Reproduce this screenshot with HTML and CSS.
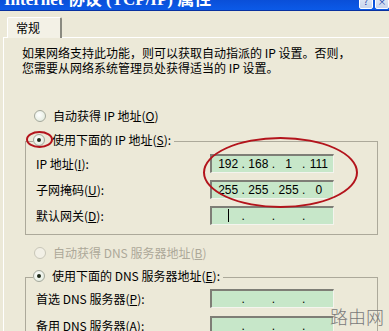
FILE: index.html
```html
<!DOCTYPE html>
<html lang="zh-CN">

<head>
    <meta charset="UTF-8">
    <meta name="viewport" content="width=device-width, initial-scale=1.0">
    <title>Internet 协议 (TCP/IP) 属性</title>
    <link rel="stylesheet" href="styles.css">
</head>

<body>
    <div id="window">
        <div id="titlebar">
            <span id="title-text">Internet 协议 (TCP/IP) 属性</span>
            <div id="caption-buttons">
                <span class="caption-btn">?</span>
                <span class="caption-btn">×</span>
            </div>
        </div>

        <div id="dialog-body">
            <div id="tabs">
                <div class="tab">常规</div>
            </div>

            <div id="tab-panel">
                <p id="intro-text">如果网络支持此功能，则可以获取自动指派的 IP 设置。否则，<br>您需要从网络系统管理员处获得适当的 IP 设置。</p>

                <div class="radio-line" id="ip-auto">
                    <span class="radio"></span>自动获得 IP 地址(<u>O</u>)
                </div>

                <div class="group-box" id="ip-group">
                    <div class="group-title radio-line">
                        <span class="radio checked"></span>使用下面的 IP 地址(<u>S</u>):
                    </div>
                    <div class="field-row">
                        <span class="field-label">IP 地址(<u>I</u>):</span>
                        <div class="ip-box">
                            <span class="octet">192</span><span class="ip-dot">.</span>
                            <span class="octet">168</span><span class="ip-dot">.</span>
                            <span class="octet">1</span><span class="ip-dot">.</span>
                            <span class="octet">111</span>
                        </div>
                    </div>
                    <div class="field-row">
                        <span class="field-label">子网掩码(<u>U</u>):</span>
                        <div class="ip-box">
                            <span class="octet">255</span><span class="ip-dot">.</span>
                            <span class="octet">255</span><span class="ip-dot">.</span>
                            <span class="octet">255</span><span class="ip-dot">.</span>
                            <span class="octet">0</span>
                        </div>
                    </div>
                    <div class="field-row">
                        <span class="field-label">默认网关(<u>D</u>):</span>
                        <div class="ip-box">
                            <span class="octet"><span class="caret"></span></span><span class="ip-dot">.</span>
                            <span class="octet"></span><span class="ip-dot">.</span>
                            <span class="octet"></span><span class="ip-dot">.</span>
                            <span class="octet"></span>
                        </div>
                    </div>
                </div>

                <div class="radio-line disabled" id="dns-auto">
                    <span class="radio"></span>自动获得 DNS 服务器地址(<u>B</u>)
                </div>

                <div class="group-box" id="dns-group">
                    <div class="group-title radio-line">
                        <span class="radio checked"></span>使用下面的 DNS 服务器地址(<u>E</u>):
                    </div>
                    <div class="field-row">
                        <span class="field-label">首选 DNS 服务器(<u>P</u>):</span>
                        <div class="ip-box">
                            <span class="octet"></span><span class="ip-dot">.</span>
                            <span class="octet"></span><span class="ip-dot">.</span>
                            <span class="octet"></span><span class="ip-dot">.</span>
                            <span class="octet"></span>
                        </div>
                    </div>
                    <div class="field-row">
                        <span class="field-label">备用 DNS 服务器(<u>A</u>):</span>
                        <div class="ip-box">
                            <span class="octet"></span><span class="ip-dot">.</span>
                            <span class="octet"></span><span class="ip-dot">.</span>
                            <span class="octet"></span><span class="ip-dot">.</span>
                            <span class="octet"></span>
                        </div>
                    </div>
                </div>
            </div>
        </div>

        <!-- hand-drawn red marks over the screenshot -->
        <div class="red-mark" id="mark-radio"></div>
        <div class="red-mark" id="mark-ip"></div>
        <div id="watermark">路由网</div>
    </div>
</body>

</html>
```

FILE: styles.css
```css
body,
html {
    margin: 0;
    padding: 0;
    width: 389px;
    height: 331px;
    overflow: hidden;
    background: #ECE9D8;
}

#window {
    position: relative;
    width: 389px;
    height: 331px;
    overflow: hidden;
    font-family: "Noto Sans CJK SC", "Liberation Sans", sans-serif;
    font-size: 12px;
    color: #000;
}

#titlebar {
    height: 10px;
    background: linear-gradient(#0A4FD8, #0B5AE8);
    border-bottom: 1px solid #0831A0;
    overflow: hidden;
    display: flex;
    justify-content: space-between;
}

#title-text {
    color: #fff;
    font-family: "Liberation Serif", "Noto Sans CJK SC", serif;
    font-weight: bold;
    font-size: 17px;
    line-height: 17px;
    margin-top: -9px;
    padding-left: 4px;
    white-space: nowrap;
}

#caption-buttons {
    display: flex;
    gap: 2px;
    margin-top: -6px;
}

.caption-btn {
    width: 12px;
    height: 13px;
    background: linear-gradient(#E8EEF8, #C8D4EC);
    border: 1px solid #fff;
    border-radius: 2px;
    color: #0831A0;
    font-size: 9px;
    line-height: 13px;
    text-align: center;
}

#dialog-body {
    padding: 6px 0 0 3px;
}

#tabs {
    display: flex;
    padding-left: 4px;
}

.tab {
    width: 44px;
    height: 20px;
    padding-left: 8px;
    line-height: 20px;
    background: #F3F1E6;
    border-top: 1px solid #fff;
    border-left: 1px solid #fff;
    border-right: 2px solid #8A8A80;
    border-radius: 2px 2px 0 0;
    position: relative;
    z-index: 1;
    margin-bottom: -1px;
}

#tab-panel {
    border-top: 1px solid #fff;
    border-left: 1px solid #fff;
    height: 294px;
    padding-left: 21px;
}

#intro-text {
    margin: 7px 0 0 -3px;
    line-height: 15px;
    white-space: nowrap;
}

.radio-line {
    display: flex;
    align-items: center;
    height: 14px;
    line-height: 14px;
    white-space: nowrap;
}

.radio-line > .radio {
    margin-right: 7px;
}

#ip-auto {
    margin-top: 34px;
    padding-left: 9px;
}

.radio {
    width: 10px;
    height: 10px;
    border-radius: 50%;
    border: 1px solid #A4A89C;
    background: radial-gradient(circle at 40% 40%, #fff, #DCE6D6);
    display: inline-flex;
    align-items: center;
    justify-content: center;
    flex-shrink: 0;
}

.radio.checked::after {
    content: "";
    width: 4px;
    height: 4px;
    border-radius: 50%;
    background: #1E2A18;
}

.radio-line.disabled {
    color: #ACA899;
}

.radio-line.disabled .radio {
    border-color: #C8C6B8;
    background: #F2F0E6;
}

.group-box {
    width: 341px;
    border: 1px solid #ACA99A;
    padding: 0 0 9px 10px;
}

#ip-group {
    margin-top: 18px;
}

#dns-group {
    margin-top: 17px;
}

.group-title {
    width: fit-content;
    margin: -9px 0 6px -3px;
    padding-right: 3px;
    background: #ECE9D8;
}

#dns-group .group-title {
    margin-bottom: 5px;
}

#dns-auto {
    margin-top: 11px;
    padding-left: 9px;
}

.field-row {
    display: flex;
    align-items: center;
    height: 20px;
    margin-bottom: 6px;
}

.field-row:last-child {
    margin-bottom: 0;
}

#dns-group .field-row {
    margin-bottom: 7px;
}

.field-label {
    width: 174px;
    white-space: nowrap;
}

.ip-box {
    width: 115px;
    height: 16px;
    padding: 0 2px 0 4px;
    background: #C7E7C9;
    border-top: 2px solid #7E7E76;
    border-left: 2px solid #7E7E76;
    border-bottom: 1px solid #F4F4EE;
    border-right: 1px solid #F4F4EE;
    display: flex;
    align-items: center;
    font-family: "Liberation Sans", sans-serif;
    font-size: 12px;
}

.octet {
    width: 25px;
    height: 16px;
    line-height: 16px;
    display: flex;
    align-items: center;
    justify-content: center;
}

.ip-dot {
    width: 6px;
    text-align: center;
    line-height: 16px;
}

.caret {
    width: 1px;
    height: 13px;
    background: #000;
}

.red-mark {
    position: absolute;
    border: 2px solid #B3141C;
    border-radius: 50%;
}

#mark-radio {
    left: 26px;
    top: 131px;
    width: 23px;
    height: 13px;
}

#mark-ip {
    left: 203px;
    top: 137px;
    width: 151px;
    height: 67px;
}

#watermark {
    position: absolute;
    left: 330px;
    top: 304px;
    font-size: 18px;
    line-height: 24px;
    font-weight: 300;
    color: #7A7A7A;
}
```
